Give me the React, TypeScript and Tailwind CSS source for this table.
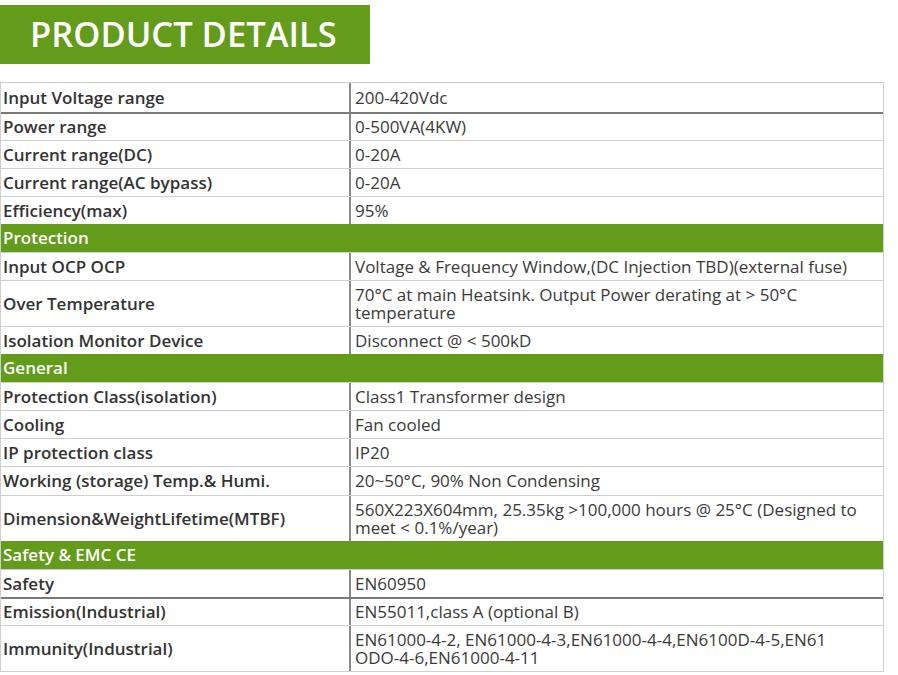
import React from "react";

type Row =
  | { kind: "row"; label: string; value: React.ReactNode; h: number; dark?: boolean }
  | { kind: "section"; label: string; h: number };

const rows: Row[] = [
  { kind: "row", label: "Input Voltage range", value: "200-420Vdc", h: 29 },
  { kind: "row", label: "Power range", value: "0-500VA(4KW)", h: 28, dark: true },
  { kind: "row", label: "Current range(DC)", value: "0-20A", h: 28 },
  { kind: "row", label: "Current range(AC bypass)", value: "0-20A", h: 28 },
  { kind: "row", label: "Efficiency(max)", value: "95%", h: 28 },
  { kind: "section", label: "Protection", h: 28 },
  { kind: "row", label: "Input OCP OCP", value: "Voltage & Frequency Window,(DC Injection TBD)(external fuse)", h: 28 },
  {
    kind: "row",
    label: "Over Temperature",
    value: (
      <>
        70°C at main Heatsink. Output Power derating at &gt; 50°C
        <br />
        temperature
      </>
    ),
    h: 46,
  },
  { kind: "row", label: "Isolation Monitor Device", value: "Disconnect @ < 500kD", h: 28 },
  { kind: "section", label: "General", h: 28 },
  { kind: "row", label: "Protection Class(isolation)", value: "Class1 Transformer design", h: 28 },
  { kind: "row", label: "Cooling", value: "Fan cooled", h: 28 },
  { kind: "row", label: "IP protection class", value: "IP20", h: 28 },
  { kind: "row", label: "Working (storage) Temp.& Humi.", value: "20~50°C, 90% Non Condensing", h: 29 },
  {
    kind: "row",
    label: "Dimension&WeightLifetime(MTBF)",
    value: (
      <>
        560X223X604mm, 25.35kg &gt;100,000 hours @ 25°C (Designed to
        <br />
        meet &lt; 0.1%/year)
      </>
    ),
    h: 46,
  },
  { kind: "section", label: "Safety & EMC CE", h: 28 },
  { kind: "row", label: "Safety", value: "EN60950", h: 28 },
  { kind: "row", label: "Emission(Industrial)", value: "EN55011,class A (optional B)", h: 28, dark: true },
  {
    kind: "row",
    label: "Immunity(Industrial)",
    value: (
      <>
        EN61000-4-2, EN61000-4-3,EN61000-4-4,EN6100D-4-5,EN61
        <br />
        ODO-4-6,EN61000-4-11
      </>
    ),
    h: 46,
  },
];

export default function App() {
  return (
    <div
      className="w-[898px] h-[675px] bg-white text-[#333]"
      style={{ fontFamily: '"Open Sans", "Noto Sans", sans-serif' }}
    >
      <div className="pt-[5px]">
        <div className="w-[370px] h-[59px] bg-[#639c1a] flex items-center pl-[30px]">
          <span className="text-white text-[34.5px] leading-none font-semibold">
            PRODUCT DETAILS
          </span>
        </div>
      </div>
      <div className="mt-[18px] w-[884px] border border-[#cfcfcf]">
        {rows.map((r, i) =>
          r.kind === "section" ? (
            <div
              key={i}
              className="bg-[#639c1a] text-white font-semibold text-[17px] leading-[18px] pl-[2px] flex items-center"
              style={{ height: r.h }}
            >
              {r.label}
            </div>
          ) : (
            <div
              key={i}
              className={
                "flex " +
                (i === 0 ? "" : r.dark ? "border-t-2 border-[#7a7a7a]" : "border-t border-[#cfcfcf]")
              }
              style={{ height: r.h }}
            >
              <div className="w-[350px] shrink-0 pl-[2px] flex items-center font-semibold text-[17px] leading-[18px] text-[#333] border-r-2 border-[#8a8a8a]">
                {r.label}
              </div>
              <div className="flex-1 pl-[4px] pr-[4px] flex items-center text-[17px] leading-[18px] text-[#3a3a3a] whitespace-nowrap">
                <div>{r.value}</div>
              </div>
            </div>
          )
        )}
      </div>
    </div>
  );
}
